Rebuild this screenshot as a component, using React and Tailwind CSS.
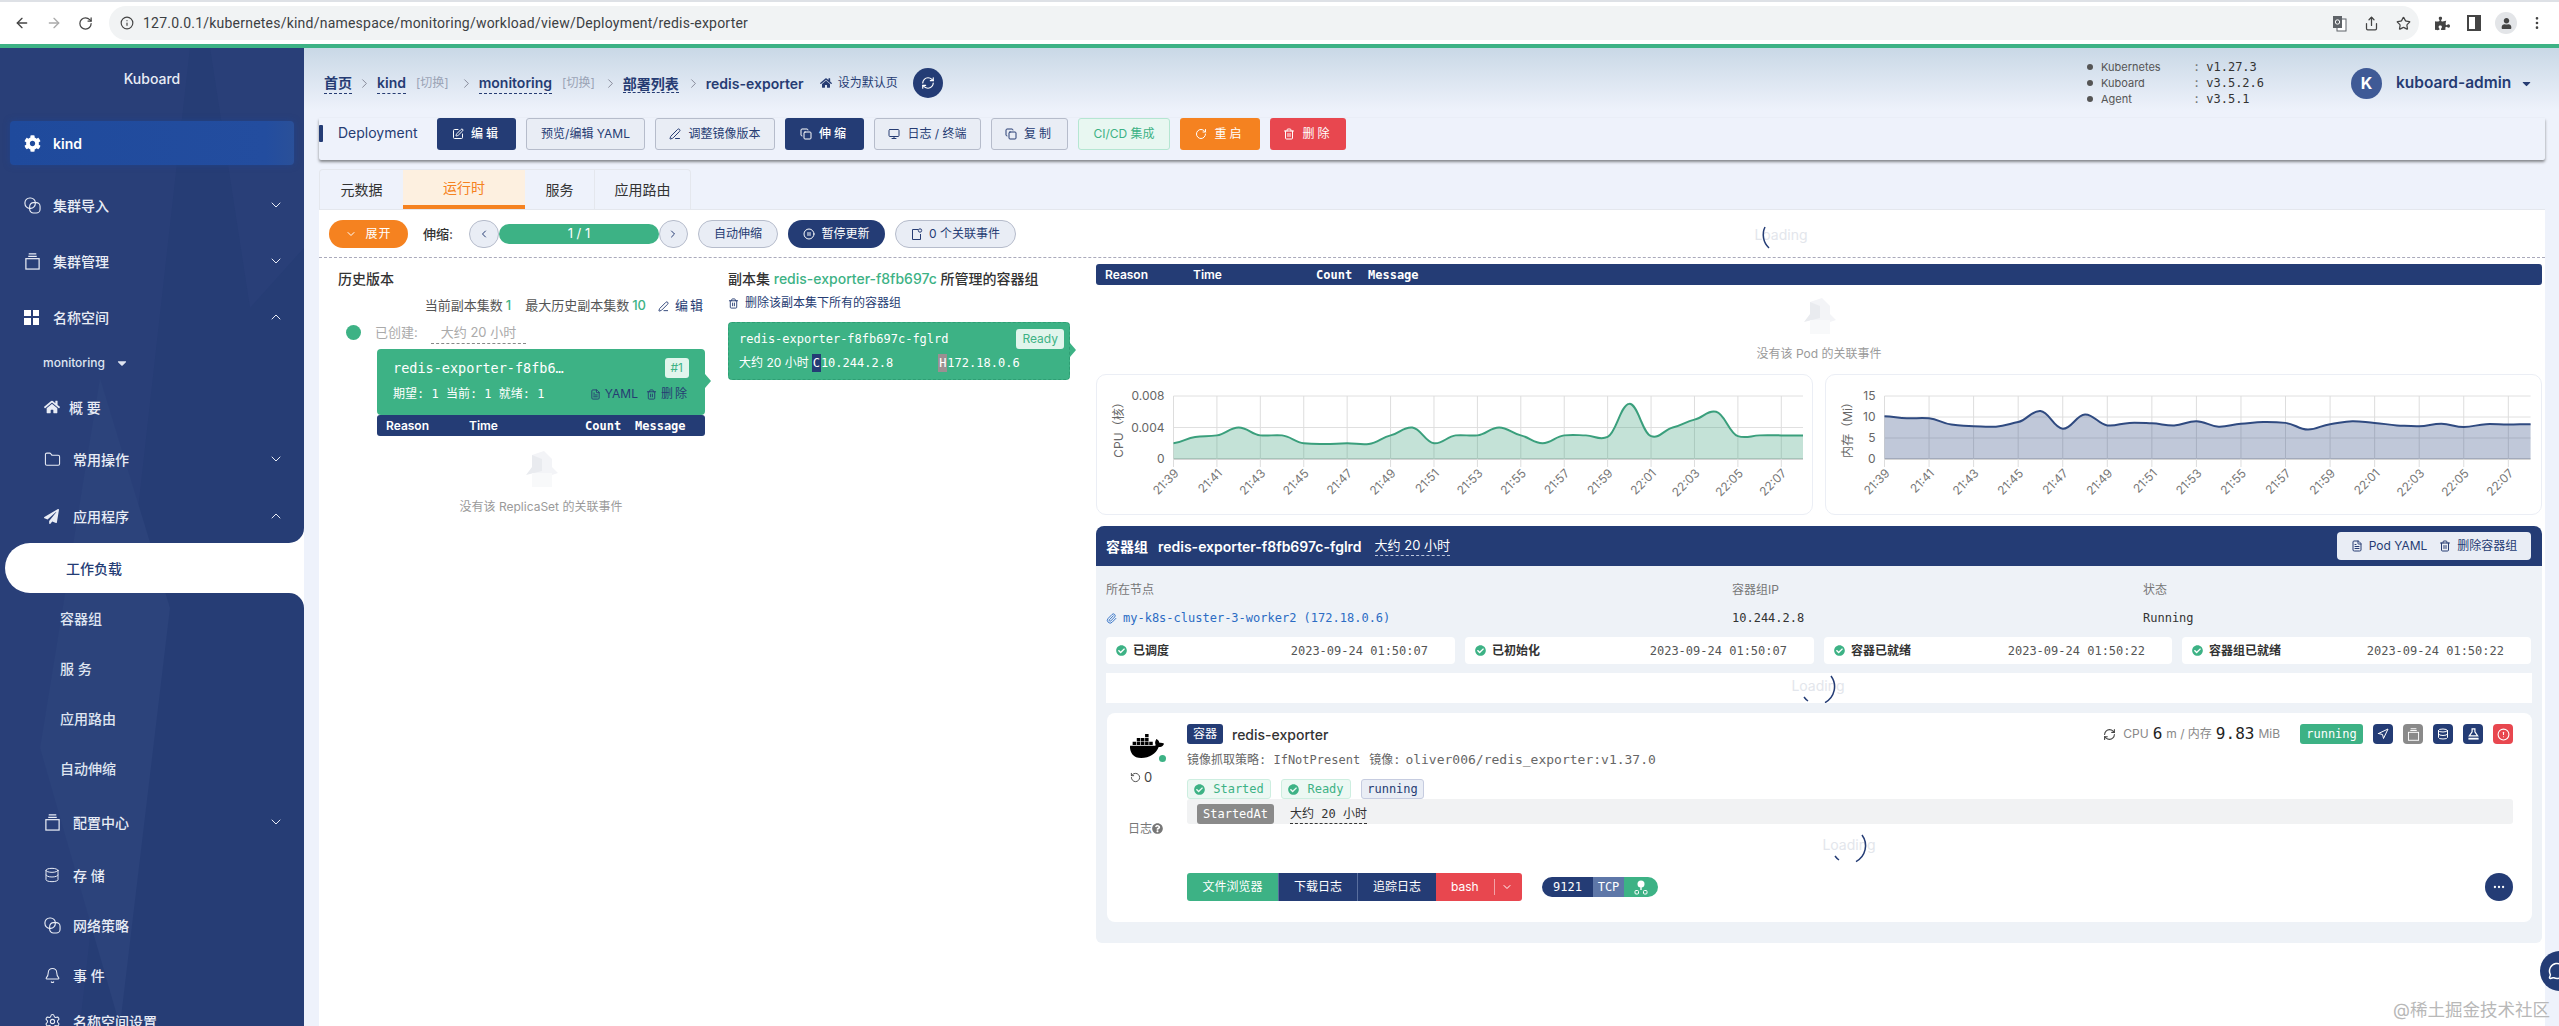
import React from "react";
import {
  ArrowLeft, ArrowRight, RotateCw, Info, Share, Star, EllipsisVertical, ChevronDown, ChevronUp,
  ChevronLeft, ChevronRight, SquarePen, PenLine, Copy, Monitor, Trash2, FileText, RefreshCw,
  Folder, Database, Bell, Settings, Paperclip, Navigation, CircleAlert, Ellipsis,
  CirclePause, MessageCircle, RotateCcw,
} from "lucide-react";
import { FaCog, FaHome, FaPaperPlane, FaPuzzlePiece, FaUser, FaDocker, FaCheckCircle, FaQuestionCircle, FaCaretDown } from "react-icons/fa";

const mono = "[font-family:'DejaVu_Sans_Mono','Noto_Sans_CJK_SC',monospace]";

const cpu = [.002, .0028, .003, .004, .003, .003, .002, .0019, .002, .0019, .003, .004, .002, .003, .003, .004, .003, .002, .003, .003, .0028, .007, .0029, .004, .005, .006, .0029, .003, .003, .003];
const mem = [10.2, 9.7, 9.7, 8.2, 7.8, 7.7, 8.8, 11.4, 7.2, 10.6, 8, 8.6, 8.5, 8, 9, 7.7, 8.4, 8.8, 8.6, 7, 8.3, 9, 8.6, 8, 7.8, 8.4, 7.6, 8.3, 8.2, 8.3];
const ticks = ["21:39", "21:41", "21:43", "21:45", "21:47", "21:49", "21:51", "21:53", "21:55", "21:57", "21:59", "22:01", "22:03", "22:05", "22:07"];

// icons the packages don't have in this shape
function LinkedIcon({ size = 17 }) {
  return (
    <svg width={size} height={size} viewBox="0 0 18 18" fill="none" stroke="currentColor" strokeWidth="1.2">
      <rect x="1" y="1" width="11" height="11" rx="5" />
      <rect x="6" y="6" width="11" height="11" rx="4" />
    </svg>
  );
}

function BoxIcon({ size = 17 }) {
  return (
    <svg width={size} height={size} viewBox="0 0 18 18" fill="none" stroke="currentColor" strokeWidth="1.3">
      <rect x="2" y="6" width="14" height="11" />
      <path d="M4.5 3.5h9M5 1h8" />
    </svg>
  );
}

function BottleIcon() {
  return (
    <svg width="13" height="13" viewBox="0 0 14 14" fill="none" stroke="currentColor" strokeWidth="1.3">
      <path d="M5.5 1h3v3l3 4.5H2.500l3-4.500z" />
      <path d="M1.500 11.500h11" strokeWidth="2" />
    </svg>
  );
}

function EventDocIcon() {
  return (
    <svg width="12" height="13" viewBox="0 0 12 13" fill="none" stroke="currentColor" strokeWidth="1">
      <path d="M7 1.500H1.500v10h8V6" />
      <circle cx="9" cy="2.500" r="1.700" />
    </svg>
  );
}

function NodesIcon() {
  return (
    <svg width="14" height="15" viewBox="0 0 14 15" fill="white">
      <circle cx="7" cy="4" r="3.500" />
      <rect x="6.300" y="6" width="1.400" height="4" />
      <rect x="1" y="10.500" width="3.500" height="3.500" rx="1" fill="none" stroke="white" />
      <rect x="9.500" y="10.500" width="3.500" height="3.500" rx="1" fill="none" stroke="white" />
    </svg>
  );
}

function TranslateIcon() {
  return (
    <svg width="15" height="17" viewBox="0 0 15 17">
      <rect x="5" y="4" width="9" height="12" fill="white" stroke="#5f6368" />
      <rect x="1" y="1" width="9" height="12" fill="#5f6368" />
      <circle cx="5.500" cy="7" r="2.200" fill="none" stroke="white" />
    </svg>
  );
}

function Chart({ plotL, plotR, data, max, yTicks, color, title }) {
  const top = 21;
  const zero = 84;
  const step = (plotR - plotL) / (data.length - 1);
  const pts = data.map((v, i) => [plotL + i * step, zero - (v / max) * (zero - top)]);
  // smooth line through the samples
  let line = `M${pts[0][0]},${pts[0][1]}`;
  for (let i = 1; i < pts.length; i++) {
    const [x0, y0] = pts[i - 1];
    const [x1, y1] = pts[i];
    const prev = pts[i - 2] || pts[i - 1];
    const next = pts[i + 1] || pts[i];
    line += ` C${x0 + step * 0.4},${y0 + (y1 - prev[1]) * 0.12} ${x1 - step * 0.4},${y1 - (next[1] - y0) * 0.12} ${x1},${y1}`;
  }
  return (
    <div className="h-[141px] rounded-[10px] border border-[#ebeef5] bg-white">
      <svg width="715" height="139" className="block">
        <text transform="translate(26 52) rotate(-90)" textAnchor="middle" fontSize="12" fill="#666">{title}</text>
        {yTicks.map(([v, label]) => {
          const y = zero - (v / max) * (zero - top);
          return (
            <g key={label}>
              <line x1={plotL} x2={plotR} y1={y} y2={y} stroke={v === 0 ? "#aaa" : "#e0e0e0"} />
              <text x={plotL - 9} y={y + 4} textAnchor="end" fontSize="12" fill="#666">{label}</text>
            </g>
          );
        })}
        {ticks.map((t, i) => {
          const x = plotL + i * 2 * step;
          return (
            <g key={t}>
              <line x1={x} x2={x} y1={top} y2={zero + 8} stroke="#ddd" />
              <text transform={`translate(${x + 6} ${zero + 15}) rotate(-45)`} textAnchor="end" fontSize="12" fill="#777">{t}</text>
            </g>
          );
        })}
        <path d={`${line} L${plotR},${zero} L${plotL},${zero} Z`} fill={color} fillOpacity="0.3" />
        <path d={line} fill="none" stroke={color} strokeWidth="2" />
      </svg>
    </div>
  );
}

function EmptyBox({ text }) {
  return (
    <div className="flex flex-col items-center">
      <svg width="38" height="38" viewBox="0 0 38 38">
        <polygon points="10,4 22,0 30,8 30,16 36,22 30,24 30,36 10,36" fill="#f3f4f7" />
        <polygon points="10,4 20,8 20,20 4,24 10,16" fill="#e9ebef" />
        <polygon points="10,22 30,22 30,36 10,36" fill="#f8f9fa" />
      </svg>
      <div className="mt-[10px] text-[12px] leading-[16px] text-[#9a9a9a]">{text}</div>
    </div>
  );
}

function EventsHeader({ className, cols }) {
  return (
    <div className={`flex items-center rounded-[3px] bg-[#243c75] text-[12px] font-semibold text-white ${className}`}>
      <span className={cols[0]}>Reason</span>
      <span className={cols[1]}>Time</span>
      <span className={`${cols[2]} ${mono}`}>Count</span>
      <span className={mono}>Message</span>
    </div>
  );
}

function Spinner({ className, arcs }) {
  return (
    <div className={`absolute h-[40px] w-[40px] ${className}`}>
      <div className="absolute left-[-9px] top-[11px] w-[58px] text-center text-[14px] leading-[18px] text-[#e3e6ec]">Loading</div>
      <svg width="40" height="40" className="absolute left-0 top-0">
        {arcs.map((d) => <path key={d} d={d} fill="none" stroke="#243c75" strokeWidth="1.5" />)}
      </svg>
    </div>
  );
}

function NavItem({ icon, label, chevron, h, extra = "" }) {
  return (
    <div className={`flex items-center pl-[24px] pr-[20px] text-[14px] font-medium text-[#e8ecf5] ${h} ${extra}`}>
      <span className="flex w-[29px] shrink-0">{icon}</span>
      <span className="flex-1">{label}</span>
      {chevron === "down" && <ChevronDown size={16} strokeWidth={1.5} />}
      {chevron === "up" && <ChevronUp size={16} strokeWidth={1.5} />}
    </div>
  );
}

function SubItem({ icon, label, chevron, h, extra = "" }) {
  return (
    <div className={`flex items-center pl-[44px] pr-[20px] text-[14px] font-medium text-[#e8ecf5] ${h} ${extra}`}>
      <span className="flex w-[29px] shrink-0">{icon}</span>
      <span className="flex-1">{label}</span>
      {chevron === "down" && <ChevronDown size={16} strokeWidth={1.5} />}
      {chevron === "up" && <ChevronUp size={16} strokeWidth={1.5} />}
    </div>
  );
}

function LeafItem({ label, h = "h-[50px]" }) {
  return <div className={`flex items-center pl-[60px] text-[14px] font-medium text-[#dfe5f1] ${h}`}>{label}</div>;
}

function Sidebar() {
  return (
    <aside className="relative w-[304px] shrink-0 overflow-hidden bg-[#263d75]">
      <svg width="304" height="978" className="absolute left-0 top-0">
        <polygon points="0,0 190,0 80,978 0,978" fill="#293f78" />
        <polygon points="210,0 304,0 304,200 250,260" fill="#293f78" />
        <polygon points="100,330 170,560 120,978 40,700" fill="#2c437b" />
      </svg>
      <div className="relative">
        <div className="flex h-[60px] items-center justify-center text-[14px] font-medium text-[#e8ecf5]">Kuboard</div>
        <div className="mx-[10px] mb-[12px] mt-[13px] flex h-[44px] items-center rounded-[4px] bg-[linear-gradient(90deg,#1f4a9c,#234d9f_90%,#2a5099)] pl-[14px] text-[14px] font-semibold text-white shadow-[0_0_6px_rgba(30,70,150,0.6)]">
          <FaCog size={17} className="mr-[12px]" />kind
        </div>
        <NavItem h="h-[56px]" label="集群导入" chevron="down" icon={<LinkedIcon />} />
        <NavItem h="h-[56px]" label="集群管理" chevron="down" icon={<BoxIcon />} />
        <NavItem h="h-[56px]" label="名称空间" chevron="up" icon={<div className="grid h-[15px] w-[15px] grid-cols-2 gap-[2px]"><i className="bg-white" /><i className="bg-white" /><i className="bg-white" /><i className="bg-white" /></div>} />
        <div className="flex h-[36px] items-center gap-[10px] pl-[43px] text-[12px] font-medium text-[#dfe5f1]">monitoring<FaCaretDown size={14} /></div>
        <div className="flex h-[52px] items-center pl-[44px] text-[14px] font-medium text-[#e8ecf5]">
          <FaHome size={16} className="mr-[9px]" />概 要
        </div>
        <SubItem h="h-[52px]" label="常用操作" chevron="down" icon={<Folder size={17} strokeWidth={1.5} />} />
        <SubItem h="h-[58px]" extra="pt-[4px]" label="应用程序" chevron="up" icon={<FaPaperPlane size={15} />} />
        <div className="relative ml-[5px] flex h-[50px] items-center rounded-l-[25px] bg-white pl-[61px] text-[14px] font-medium text-[#243c75]">
          工作负载
          <div className="absolute -top-[15px] right-0 h-[15px] w-[15px] bg-white"><div className="h-full w-full rounded-br-[15px] bg-[#263d75]" /></div>
          <div className="absolute -bottom-[15px] right-0 h-[15px] w-[15px] bg-white"><div className="h-full w-full rounded-tr-[15px] bg-[#263d75]" /></div>
        </div>
        <LeafItem label="容器组" />
        <LeafItem label="服 务" />
        <LeafItem label="应用路由" />
        <LeafItem label="自动伸缩" />
        <SubItem h="h-[58px]" label="配置中心" chevron="down" icon={<BoxIcon />} />
        <SubItem h="h-[48px]" label="存 储" icon={<Database size={16} strokeWidth={1.5} />} />
        <SubItem h="h-[52px]" label="网络策略" icon={<LinkedIcon />} />
        <SubItem h="h-[48px]" label="事 件" icon={<Bell size={17} strokeWidth={1.5} />} />
        <SubItem h="h-[44px]" label="名称空间设置" icon={<Settings size={17} strokeWidth={1.5} />} />
      </div>
    </aside>
  );
}

function ActionButton({ className, icon, children }) {
  return (
    <div className={`flex h-[32px] items-center justify-center gap-[7px] rounded-[3px] text-[12px] ${className}`}>
      {icon}{children}
    </div>
  );
}

const plainBtn = "border border-[#b6bccb] bg-[#e9edf5] text-[#263c73]";
const navyBtn = "bg-[#243c75] text-white";

function Crumb({ children }) {
  return <span className="border-b border-dashed border-[#263c73] font-semibold text-[#263c73]">{children}</span>;
}

function Sep() {
  return <ChevronRight size={15} strokeWidth={1} className="mx-[5px] text-[#556]" />;
}

function Condition({ label, date, className }) {
  return (
    <div className={`flex h-[27px] items-center rounded-[4px] bg-white pl-[10px] ${className}`}>
      <FaCheckCircle size={11} className="mr-[6px] text-[#3db285]" />
      <span className="flex-1 text-[12px] font-semibold text-[#333]">{label}</span>
      <span className={`mr-[27px] text-[12px] text-[#555] ${mono}`}>{date}</span>
    </div>
  );
}

function StatusTag({ children, className }) {
  return <span className={`flex h-[20px] items-center rounded-[3px] border text-[12px] ${mono} ${className}`}>{children}</span>;
}

function SquareIcon({ className, children }) {
  return <span className={`flex h-[20px] w-[20px] items-center justify-center rounded-[4px] text-white ${className}`}>{children}</span>;
}

export default function App() {
  return (
    <div className="relative flex h-[1026px] w-[2559px] flex-col overflow-hidden bg-white [font-family:Inter,'Noto_Sans_CJK_SC',sans-serif]">
      {/* browser toolbar */}
      <div className="h-[2px] bg-[#dee1e6]" />
      <div className="flex h-[42px] items-center bg-white py-[4px]">
        <ArrowLeft size={16} className="ml-[14px] text-[#444]" />
        <ArrowRight size={16} className="ml-[16px] text-[#aaa]" />
        <RotateCw size={15} className="ml-[16px] text-[#444]" />
        <div className="ml-[16px] flex h-[34px] w-[2310px] items-center rounded-full bg-[#f1f3f4] pl-[11px]">
          <Info size={14} className="mr-[9px] text-[#444]" />
          <span className="text-[14px] tracking-[0.22px] text-[#3c4043] [font-family:Roboto,sans-serif]">127.0.0.1/kubernetes/kind/namespace/monitoring/workload/view/Deployment/redis-exporter</span>
          <span className="flex-1" />
          <span className="mr-[17px]"><TranslateIcon /></span>
          <Share size={15} className="mr-[17px] text-[#444]" />
          <Star size={15} className="mr-[8px] text-[#444]" />
        </div>
        <FaPuzzlePiece size={15} className="ml-[16px] text-[#444]" />
        <div className="ml-[17px] h-[16px] w-[14px] border-[2px] border-r-[6px] border-[#444]" />
        <span className="ml-[14px] flex h-[22px] w-[22px] items-center justify-center rounded-full bg-[#e3e5e8]"><FaUser size={11} className="text-[#444]" /></span>
        <EllipsisVertical size={16} className="ml-[12px] text-[#444]" />
      </div>
      <div className="h-[4px] bg-[#3db285]" />

      <div className="flex flex-1 overflow-hidden">
        <Sidebar />
        <main className="flex min-w-0 flex-1 flex-col bg-[#eef2fb]">
          <div className="bg-[linear-gradient(#c9d8e6,#eef2fb_56%)]">
            {/* breadcrumb */}
            <div className="flex h-[70px] items-center pl-[20px] pr-[26px]">
              <div className="flex items-center text-[14px]">
                <Crumb>首页</Crumb><Sep />
                <Crumb>kind</Crumb><span className="ml-[10px] mr-[5px] text-[12px] text-[#9aa3b5]">[切换]</span><Sep />
                <Crumb>monitoring</Crumb><span className="ml-[10px] mr-[3px] text-[12px] text-[#9aa3b5]">[切换]</span><Sep />
                <span className="mr-[2px]"><Crumb>部署列表</Crumb></span><Sep />
                <span className="font-semibold text-[#263c73]">redis-exporter</span>
                <FaHome size={12} className="ml-[16px] mr-[6px] text-[#263c73]" />
                <span className="text-[12px] text-[#263c73]">设为默认页</span>
                <span className="ml-[15px] flex h-[30px] w-[30px] items-center justify-center rounded-full bg-[#243c75]"><RefreshCw size={14} className="text-white" /></span>
              </div>
              <div className="flex-1" />
              <div className="mr-[99px] grid w-[165px] grid-cols-[106px_1fr] text-[11px] leading-[16px] text-[#555]">
                {[["Kubernetes", "v1.27.3"], ["Kuboard", "v3.5.2.6"], ["Agent", "v3.5.1"]].map(([k, v]) => (
                  <React.Fragment key={k}>
                    <span className="flex items-center"><i className="mr-[8px] h-[6px] w-[6px] rounded-full bg-[#555]" />{k}</span>
                    <span className={`flex text-[12px] text-[#333] ${mono}`}><span className="mr-[6px] text-[#777]">:</span>{v}</span>
                  </React.Fragment>
                ))}
              </div>
              <div className="flex items-center">
                <span className="flex h-[31px] w-[31px] items-center justify-center rounded-full bg-[#3f5a96] text-[16px] font-bold text-white">K</span>
                <span className="ml-[14px] w-[117px] whitespace-nowrap text-[15.5px] font-semibold text-[#263c73]">kuboard-admin</span>
                <FaCaretDown size={13} className="ml-[7px] text-[#263c73]" />
              </div>
            </div>

            {/* action bar */}
            <div className="ml-[15px] mr-[14px] flex h-[42px] rounded-b-[2px] shadow-[0_2px_3px_rgba(0,0,0,0.45)]">
              <div className="mt-[7px] h-[17px] w-[4px] rounded-[1px] bg-[#243c75]" />
              <div className="ml-[15px] w-[99px] pt-[6px] text-[14px] leading-[18px] text-[#263c73]">Deployment</div>
              <div className="flex gap-[10px]">
                <ActionButton className={`w-[79px] font-medium tracking-[3px] ${navyBtn}`} icon={<SquarePen size={12} />}>编辑</ActionButton>
                <ActionButton className={`w-[119px] ${plainBtn}`}>预览/编辑 YAML</ActionButton>
                <ActionButton className={`w-[120px] ${plainBtn}`} icon={<PenLine size={12} />}>调整镜像版本</ActionButton>
                <ActionButton className={`w-[79px] font-medium tracking-[3px] ${navyBtn}`} icon={<Copy size={12} />}>伸缩</ActionButton>
                <ActionButton className={`w-[107px] ${plainBtn}`} icon={<Monitor size={12} />}>日志 / 终端</ActionButton>
                <ActionButton className={`w-[77px] tracking-[3px] ${plainBtn}`} icon={<Copy size={12} />}>复制</ActionButton>
                <ActionButton className="w-[92px] border border-[#b5e6d2] bg-[#e8f7f1] text-[#3db285]">CI/CD 集成</ActionButton>
                <ActionButton className="w-[80px] bg-[#f58220] tracking-[3px] text-white" icon={<RotateCw size={12} />}>重启</ActionButton>
                <ActionButton className="w-[76px] bg-[#e8474f] tracking-[3px] text-white" icon={<Trash2 size={12} />}>删除</ActionButton>
              </div>
            </div>
          </div>

          {/* tabs */}
          <div className="ml-[15px] mr-[14px] mt-[9px] flex h-[41px] border-b border-[#e4e7ed]">
            <div className="flex rounded-t-[4px] border border-b-0 border-[#e4e7ed] text-[14px] text-[#333]">
              <div className="flex w-[83px] items-center justify-center">元数据</div>
              <div className="flex w-[122px] items-center justify-center border-b-[4px] border-[#f58220] bg-[#fdf0e0] text-[#f58220]">运行时</div>
              <div className="flex w-[70px] items-center justify-center border-r border-[#e4e7ed]">服务</div>
              <div className="flex w-[95px] items-center justify-center">应用路由</div>
            </div>
          </div>

          {/* white panel */}
          <div className="relative ml-[15px] mr-[14px] flex-1 bg-white">
            <div className="relative flex h-[48px] items-start gap-[10px] border-b border-dashed border-[#aab] pl-[10px] pt-[10px]">
              <div className="flex h-[28px] w-[79px] items-center justify-center gap-[8px] rounded-full bg-[#f58220] text-[12px] tracking-[1px] text-white"><ChevronDown size={12} />展开</div>
              <span className="ml-[5px] mr-[-1px] text-[13px] leading-[28px] font-medium text-[#333]">伸缩:</span>
              <div className="ml-[7px] flex items-center">
                <span className="flex h-[28px] w-[30px] items-center justify-center rounded-full border border-[#b6bccb] bg-[#e9edf5]"><ChevronLeft size={12} className="text-[#263c73]" /></span>
                <span className="flex h-[20px] w-[160px] items-center justify-center rounded-full bg-[#3db285] text-[13px] text-white">1 / 1</span>
                <span className="flex h-[28px] w-[29px] items-center justify-center rounded-full border border-[#b6bccb] bg-[#e9edf5]"><ChevronRight size={12} className="text-[#263c73]" /></span>
              </div>
              <div className={`flex h-[28px] w-[80px] items-center justify-center rounded-full text-[12px] ${plainBtn}`}>自动伸缩</div>
              <div className={`flex h-[28px] w-[97px] items-center justify-center gap-[6px] rounded-full text-[12px] ${navyBtn}`}><CirclePause size={12} />暂停更新</div>
              <div className={`flex h-[28px] w-[121px] items-center justify-center gap-[6px] rounded-full text-[12px] ${plainBtn}`}><EventDocIcon />0 个关联事件</div>
              <Spinner className="left-[1442px] top-[5px]" arcs={["M8,33 A18,18 0 0 1 4,12"]} />
            </div>

            <div className="flex">
              {/* history + replica set columns */}
              <div className="flex w-[777px] shrink-0">
                <div className="w-[409px] shrink-0 pl-[19px]">
                  <div className="pt-[12px] text-[14px] leading-[18px] font-medium text-[#333]">历史版本</div>
                  <div className="mt-[9px] flex h-[18px] items-center justify-end pr-[23px] text-[13px] text-[#555]">
                    当前副本集数<b className="ml-[3px] mr-[14px] font-medium text-[#3db285]">1</b>最大历史副本集数<b className="ml-[3px] mr-[12px] font-medium text-[#3db285]">10</b>
                    <PenLine size={11} className="mr-[6px] text-[#263c73]" /><span className="tracking-[2px] text-[#263c73]">编辑</span>
                  </div>
                  <div className="mt-[8px] flex h-[26px] items-start text-[13px] text-[#aaa]">
                    <i className="ml-[8px] mr-[14px] mt-[2px] h-[15px] w-[15px] rounded-full bg-[#3db285]" />
                    <span className="mr-[13px]">已创建:</span>
                    <span className="h-[21px] border-b border-dashed border-[#888] px-[10px]">大约 20 小时</span>
                  </div>
                  <div className="ml-[39px] w-[328px]">
                    <div className="relative h-[66px] rounded-[4px] bg-[#3db285] px-[16px] text-white">
                      <div className="flex items-center pt-[9px]">
                        <span className={`flex-1 text-[13.5px] leading-[18px] ${mono}`}>redis-exporter-f8fb6…</span>
                        <span className="rounded-[3px] bg-[#e1f5ec] px-[6px] text-[12px] leading-[20px] text-[#3db285]">#1</span>
                      </div>
                      <div className="mt-[7px] flex items-center text-[12px]">
                        <span className={`flex-1 ${mono}`}>期望: 1 当前: 1 就绪: 1</span>
                        <span className="flex items-center gap-[4px] text-[#263c73]"><FileText size={11} />YAML<Trash2 size={11} className="ml-[4px]" /><span className="tracking-[2px]">删除</span></span>
                      </div>
                      <div className="absolute -right-[6px] top-[25px] h-0 w-0 border-y-[7px] border-l-[6px] border-y-transparent border-l-[#3db285]" />
                    </div>
                    <EventsHeader className="h-[21px] pl-[9px]" cols={["w-[83px]", "w-[116px]", "w-[50px]"]} />
                    <div className="mt-[15px]"><EmptyBox text="没有该 ReplicaSet 的关联事件" /></div>
                  </div>
                </div>
                <div className="w-[343px] shrink-0">
                  <div className="pt-[12px] text-[14px] leading-[18px] font-medium text-[#333]">副本集 <span className="text-[#3db285]">redis-exporter-f8fb697c</span> 所管理的容器组</div>
                  <div className="mt-[6px] flex h-[18px] items-center gap-[6px] text-[12px] text-[#263c73]"><Trash2 size={11} />删除该副本集下所有的容器组</div>
                  <div className="relative mt-[10px] h-[58px] w-[342px] rounded-[4px] border border-dashed border-[#2f9e74] bg-[#3db285] pl-[10px] text-white">
                    <div className="flex items-center pt-[6px]">
                      <span className={`flex-1 text-[12px] leading-[20px] ${mono}`}>redis-exporter-f8fb697c-fglrd</span>
                      <span className="mr-[5px] rounded-[3px] bg-[#e1f5ec] px-[6px] text-[12px] leading-[20px] text-[#3db285]">Ready</span>
                    </div>
                    <div className={`mt-[5px] flex items-center text-[12px] ${mono}`}>
                      <span className="[font-family:Inter,'Noto_Sans_CJK_SC',sans-serif]">大约 20 小时</span>
                      <span className="ml-[3px] bg-[#243c75] px-[1px]">C</span>10.244.2.8
                      <span className="ml-[45px] bg-[#9c8f92] px-[1px]">H</span>172.18.0.6
                    </div>
                    <div className="absolute -right-[7px] top-[20px] h-0 w-0 border-y-[7px] border-l-[6px] border-y-transparent border-l-[#3db285]" />
                  </div>
                </div>
              </div>

              {/* pod side */}
              <div className="w-[1446px] shrink-0 pt-[6px]">
                <EventsHeader className="h-[21px] pl-[9px]" cols={["w-[88px]", "w-[123px]", "w-[52px]"]} />
                <div className="flex h-[89px] items-start justify-center pt-[13px]"><EmptyBox text="没有该 Pod 的关联事件" /></div>
                <div className="grid grid-cols-2 gap-[12px]">
                  <Chart plotL={76.5} plotR={706} data={cpu} max={0.008} color="#3a9f7c" title="CPU（核）" yTicks={[[0, "0"], [0.004, "0.004"], [0.008, "0.008"]]} />
                  <Chart plotL={58.5} plotR={704.6} data={mem} max={15} color="#2f4a80" title="内存（Mi）" yTicks={[[0, "0"], [5, "5"], [10, "10"], [15, "15"]]} />
                </div>

                {/* pod panel */}
                <div className="mt-[11px] h-[417px] rounded-t-[8px] rounded-b-[6px] bg-[#eef2f7]">
                  <div className="flex h-[40px] items-center rounded-t-[8px] bg-[#243c75] pl-[10px] pr-[11px] text-[14px] text-white">
                    <span className="font-semibold">容器组</span>
                    <span className="ml-[10px] font-semibold">redis-exporter-f8fb697c-fglrd</span>
                    <span className="ml-[13px] border-b border-dashed border-[#bcc6dc] text-[13px]">大约 20 小时</span>
                    <span className="flex-1" />
                    <span className="flex h-[28px] w-[194px] items-center justify-center gap-[6px] rounded-[4px] bg-[#e9edf5] text-[12px] text-[#263c73]"><FileText size={12} />Pod YAML<Trash2 size={12} className="ml-[6px]" />删除容器组</span>
                  </div>
                  <div className="flex pl-[10px] pt-[15px] text-[12px] leading-[18px] text-[#777]">
                    <span className="w-[626px]">所在节点</span><span className="w-[411px]">容器组IP</span><span>状态</span>
                  </div>
                  <div className={`mt-[10px] flex pl-[10px] text-[12px] leading-[18px] text-[#333] ${mono}`}>
                    <span className="flex w-[626px] items-center text-[#2b6cc4]"><Paperclip size={11} className="mr-[6px]" />my-k8s-cluster-3-worker2 (172.18.0.6)</span>
                    <span className="w-[411px]">10.244.2.8</span><span>Running</span>
                  </div>
                  <div className="mt-[10px] flex gap-[10px] pl-[10px]">
                    <Condition className="w-[349px]" label="已调度" date="2023-09-24 01:50:07" />
                    <Condition className="w-[349px]" label="已初始化" date="2023-09-24 01:50:07" />
                    <Condition className="w-[348px]" label="容器已就绪" date="2023-09-24 01:50:22" />
                    <Condition className="w-[349px]" label="容器组已就绪" date="2023-09-24 01:50:22" />
                  </div>
                  <div className="relative ml-[10px] mt-[9px] h-[30px] w-[1426px] overflow-hidden bg-white">
                    <Spinner className="left-[692px] top-[-7px]" arcs={["M33,10 A18,18 0 0 1 27,36.6", "M6,31 A18,18 0 0 0 10,35"]} />
                  </div>
                  {/* container card */}
                  <div className="ml-[11px] mt-[10px] flex h-[209px] w-[1425px] rounded-[8px] bg-white">
                    <div className="w-[80px] shrink-0 pl-[23px]">
                      <div className="relative mt-[16px] h-[30px] w-[34px]">
                        <FaDocker size={34} className="text-black" />
                        <i className="absolute -right-[2px] bottom-[-3px] h-[7px] w-[7px] rounded-full bg-[#3db285]" />
                      </div>
                      <div className="mt-[9px] flex items-center gap-[3px] text-[13px] text-[#444]"><RotateCcw size={11} />0</div>
                      <div className="-ml-[2px] mt-[32px] flex items-center text-[12px] text-[#777]">日志<FaQuestionCircle size={11} /></div>
                    </div>
                    <div className="min-w-0 flex-1 pr-[19px] pt-[11px]">
                      <div className="flex h-[20px] items-center">
                        <span className="flex h-[20px] w-[36px] items-center justify-center rounded-[3px] bg-[#243c75] text-[12px] text-white">容器</span>
                        <span className="ml-[9px] text-[14px] font-medium text-[#333]">redis-exporter</span>
                        <span className="flex-1" />
                        <RefreshCw size={13} className="mr-[7px] text-[#444]" />
                        <span className="text-[12px] text-[#888]">CPU</span>
                        <span className={`mx-[4px] text-[16px] text-[#222] ${mono}`}>6</span>
                        <span className="text-[12px] text-[#888]">m / 内存</span>
                        <span className={`mx-[4px] text-[16px] text-[#222] ${mono}`}>9.83</span>
                        <span className="mr-[20px] text-[12px] text-[#888]">MiB</span>
                        <span className={`mr-[10px] flex h-[20px] w-[63px] items-center justify-center rounded-[3px] bg-[#3db285] text-[12px] text-white ${mono}`}>running</span>
                        <div className="flex gap-[10px]">
                          <SquareIcon className="bg-[#243c75]"><Navigation size={12} /></SquareIcon>
                          <SquareIcon className="bg-[#8a8a8a]"><BoxIcon size={13} /></SquareIcon>
                          <SquareIcon className="bg-[#243c75]"><Database size={12} /></SquareIcon>
                          <SquareIcon className="bg-[#243c75]"><BottleIcon /></SquareIcon>
                          <SquareIcon className="bg-[#e8474f]"><CircleAlert size={13} /></SquareIcon>
                        </div>
                      </div>
                      <div className={`mt-[7px] flex text-[12px] leading-[18px] text-[#666] ${mono}`}>
                        <span>镜像抓取策略: IfNotPresent</span>
                        <span className="ml-[9px]">镜像:</span>
                        <span className="ml-[5px] text-[13px]">oliver006/redis_exporter:v1.37.0</span>
                      </div>
                      <div className="mt-[10px] flex gap-[10px]">
                        <StatusTag className="w-[84px] justify-center gap-[8px] border-[#cdeee0] bg-[#ecf8f3] text-[#3db285]"><FaCheckCircle size={11} />Started</StatusTag>
                        <StatusTag className="w-[70px] justify-center gap-[8px] border-[#cdeee0] bg-[#ecf8f3] text-[#3db285]"><FaCheckCircle size={11} />Ready</StatusTag>
                        <StatusTag className="w-[63px] justify-center border-[#c6cce0] bg-[#e9edf5] text-[#263c73]">running</StatusTag>
                      </div>
                      <div className={`flex h-[25px] items-end rounded-[3px] bg-[#f1f2f3] pl-[10px] text-[12px] ${mono}`}>
                        <span className="flex h-[20px] w-[77px] items-center justify-center rounded-[3px] bg-[#8a8a8a] text-white">StartedAt</span>
                        <span className="ml-[16px] border-b border-dashed border-[#333] leading-[18px] text-[#333]">大约 20 小时</span>
                      </div>
                      <div className="relative h-[49px] overflow-hidden">
                        <Spinner className="left-[642px] top-[1px]" arcs={["M33,10 A18,18 0 0 1 27,36.6", "M6,31 A18,18 0 0 0 10,35"]} />
                      </div>
                      <div className="flex items-center">
                        <div className="flex h-[28px] overflow-hidden rounded-[3px] text-[12px] text-white">
                          <span className="flex w-[91px] items-center justify-center bg-[#3db285]">文件浏览器</span>
                          <span className="flex w-[79px] items-center justify-center border-l border-[#5a6f9e] bg-[#243c75]">下载日志</span>
                          <span className="flex w-[79px] items-center justify-center border-l border-[#5a6f9e] bg-[#243c75]">追踪日志</span>
                          <span className="flex w-[86px] items-center bg-[#e8474f] pl-[15px]">bash<i className="ml-[15px] h-[16px] w-px bg-[#f3a3a7]" /><ChevronDown size={12} className="ml-[6px]" /></span>
                        </div>
                        <div className={`ml-[20px] flex h-[20px] overflow-hidden rounded-full text-[12px] text-white ${mono}`}>
                          <span className="flex w-[51px] items-center justify-center bg-[#243c75]">9121</span>
                          <span className="flex w-[31px] items-center justify-center bg-[#5e77a8]">TCP</span>
                          <span className="flex w-[34px] items-center justify-center bg-[#3db285]"><NodesIcon /></span>
                        </div>
                        <span className="flex-1" />
                        <span className="flex h-[28px] w-[28px] items-center justify-center rounded-full bg-[#243c75] text-white"><Ellipsis size={14} /></span>
                      </div>
                    </div>
                  </div>
                </div>
              </div>
            </div>
          </div>
        </main>
      </div>

      {/* floating over the page */}
      <div className="absolute left-[2540px] top-[951px] flex h-[40px] w-[40px] items-center rounded-full bg-[#243c75] pl-[8px] text-white"><MessageCircle size={18} /></div>
      <div className="absolute left-[2393px] top-[999px] text-[17.5px] leading-[22px] text-[#b8b8b8]">@稀土掘金技术社区</div>
    </div>
  );
}
